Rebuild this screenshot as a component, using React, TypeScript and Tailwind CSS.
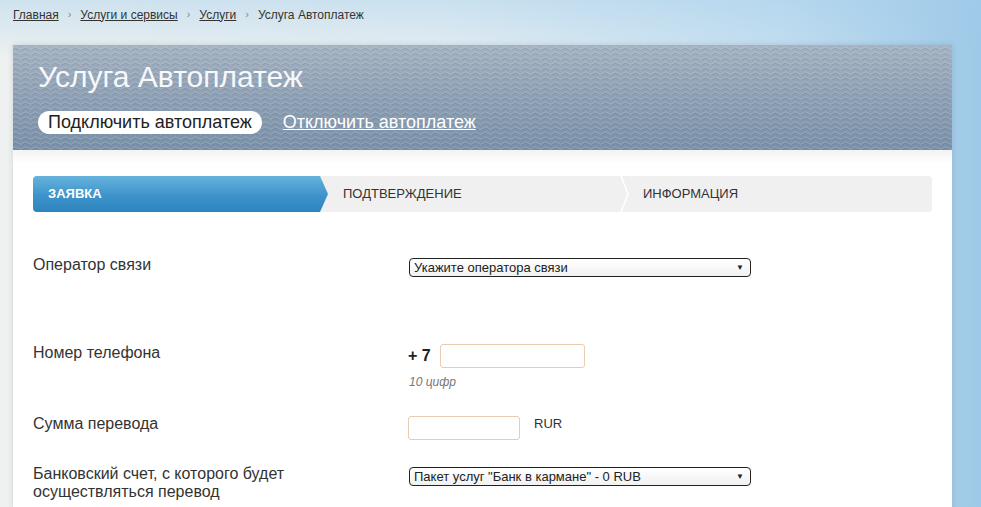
import React from 'react';

const crumbs = ['Главная', 'Услуги и сервисы', 'Услуги'];

const Waves: React.FC = () => (
  <svg className="absolute inset-0 h-full w-full pointer-events-none" aria-hidden>
    <defs>
      <pattern id="wv" width="10" height="5" patternUnits="userSpaceOnUse">
        <path d="M0 3 Q2.5 0.5 5 3 T10 3" fill="none" stroke="#ffffff" strokeOpacity="0.18" strokeWidth="1" />
        <path d="M0 4.5 Q2.5 2 5 4.5 T10 4.5" fill="none" stroke="#34495e" strokeOpacity="0.14" strokeWidth="1" />
      </pattern>
    </defs>
    <rect width="100%" height="100%" fill="url(#wv)" />
  </svg>
);

const FakeSelect: React.FC<{ text: string }> = ({ text }) => (
  <div className="flex h-[19px] w-[342px] items-center justify-between rounded-[4px] border border-[#222] bg-[linear-gradient(#ffffff,#f1f1f1)] pl-[4px] pr-[6px] text-[13px] leading-none text-[#222]">
    <span>{text}</span>
    <span className="text-[8px]">▼</span>
  </div>
);

export default function App() {
  return (
    <div
      className="relative h-[507px] w-full overflow-hidden bg-[linear-gradient(90deg,#eef1f0_0%,#e6eef2_45%,#c4def0_80%,#9ec9e7_100%)] text-[#333]"
      style={{ fontFamily: '"Liberation Sans", Arial, sans-serif' }}
    >
      <div className="absolute inset-x-0 top-0 h-[60px] bg-[linear-gradient(180deg,rgba(160,205,235,0.4),rgba(160,205,235,0))]" />

      <div className="relative">
        {/* breadcrumbs */}
        <div className="flex h-[29px] items-center pl-[13px] text-[12px] text-[#333]">
          {crumbs.map((c) => (
            <React.Fragment key={c}>
              <span className="underline">{c}</span>
              <span className="mx-[9px] text-[11px] text-[#888]">›</span>
            </React.Fragment>
          ))}
          <span>Услуга Автоплатеж</span>
        </div>

        {/* card */}
        <div className="ml-[13px] mt-[16px] w-[939px] shadow-[0_0_6px_rgba(0,0,0,0.12)]">
          <div className="relative h-[105px] overflow-hidden bg-[linear-gradient(180deg,#a4b2c2_0%,#8d9fb3_50%,#7990a8_100%)] px-[25px]">
            <Waves />
            <div className="relative pt-[15px] text-[30px] leading-[34px] text-[#f6f8fa]">Услуга Автоплатеж</div>
            <div className="relative mt-[15px] flex items-center">
              <span className="flex h-[23px] items-center rounded-full bg-white px-[10px] text-[18px] text-[#222]">
                Подключить автоплатеж
              </span>
              <span className="ml-[21px] text-[18px] text-white underline">Отключить автоплатеж</span>
            </div>
          </div>

          <div className="h-[360px] bg-[linear-gradient(180deg,#f3f3f3_0px,#ffffff_14px)] px-[20px] pt-[26px]">
            {/* steps */}
            <div className="relative flex h-[36px] w-[899px] items-center rounded-[4px] bg-[#f0f0f0] text-[13px] uppercase">
              <div className="flex h-full w-[295px] items-center rounded-l-[4px] bg-[linear-gradient(180deg,#67b3de_0%,#3d93ca_55%,#2e84bd_100%)] pl-[15px] font-bold text-white [clip-path:polygon(0_0,287px_0,295px_50%,287px_100%,0_100%)]">
                Заявка
              </div>
              <div className="pl-[15px] text-[#333]">Подтверждение</div>
              <svg className="absolute left-[587px] top-0 h-[36px] w-[10px]" viewBox="0 0 10 36">
                <polyline points="1,0 8,18 1,36" fill="none" stroke="#ffffff" strokeWidth="1.5" />
              </svg>
              <div className="absolute left-[610px] text-[#333]">Информация</div>
            </div>

            {/* rows */}
            <div className="mt-[44px] flex text-[16px] leading-[18px]">
              <div className="w-[376px]">Оператор связи</div>
              <div className="pt-[2px]">
                <FakeSelect text="Укажите оператора связи" />
              </div>
            </div>

            <div className="mt-[67px] flex text-[16px] leading-[18px]">
              <div className="w-[375px]">Номер телефона</div>
              <div>
                <div className="flex items-center">
                  <span className="w-[32px] text-[16px] font-bold text-[#222]">+ 7</span>
                  <div className="h-[24px] w-[145px] rounded-[3px] border border-[#e8cdb3] bg-white" />
                </div>
                <div className="mt-[5px] pl-[1px] text-[12px] italic text-[#777]">10 цифр</div>
              </div>
            </div>

            <div className="mt-[24px] flex text-[16px] leading-[18px]">
              <div className="w-[375px]">Сумма перевода</div>
              <div className="flex items-start">
                <div className="mt-[1px] h-[24px] w-[112px] rounded-[3px] border border-[#e8cdb3] bg-white" />
                <span className="ml-[14px] text-[13px] text-[#333]">RUR</span>
              </div>
            </div>

            <div className="mt-[25px] flex text-[16px] leading-[18px]">
              <div className="w-[376px]">
                Банковский счет, с которого будет
                <br />
                осуществляться перевод
              </div>
              <div className="pt-[2px]">
                <FakeSelect text={'Пакет услуг "Банк в кармане" - 0 RUB'} />
              </div>
            </div>
          </div>
        </div>
      </div>
    </div>
  );
}
